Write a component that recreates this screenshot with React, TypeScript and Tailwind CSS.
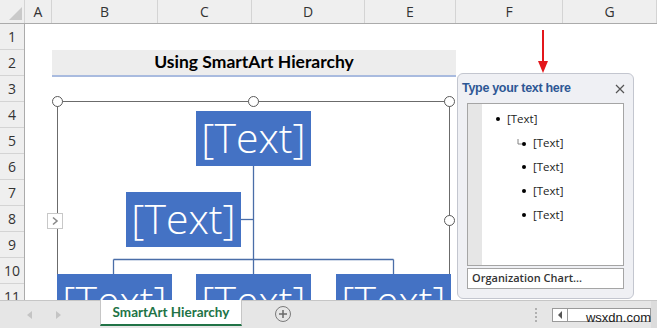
import React from "react";

const cols = [
  { l: "A", w: 27 },
  { l: "B", w: 106 },
  { l: "C", w: 94 },
  { l: "D", w: 113 },
  { l: "E", w: 91 },
  { l: "F", w: 107 },
  { l: "G", w: 94 },
];
const rows = [1, 2, 3, 4, 5, 6, 7, 8, 9, 10, 11];

function Box({ x, y }: { x: number; y: number }) {
  return (
    <div
      className="absolute w-[115px] h-[55px] bg-[#4472c4] flex items-center justify-center text-white text-[41px] font-light leading-none"
      style={{ left: x, top: y, fontFamily: '"Open Sans", sans-serif' }}
    >
      <span className="-mt-[2px]">[Text]</span>
    </div>
  );
}

function Handle({ x, y }: { x: number; y: number }) {
  return (
    <div
      className="absolute w-[11px] h-[11px] rounded-full border-[1.5px] border-[#5a5a5a] bg-white"
      style={{ left: x - 5.5, top: y - 5.5 }}
    />
  );
}

export default function App() {
  const hdrFont = { fontFamily: '"Open Sans", "Liberation Sans", sans-serif' };
  return (
    <div className="w-[657px] h-[328px] overflow-hidden bg-white flex flex-col relative" style={hdrFont}>
      {/* column header */}
      <div className="flex h-[24px] bg-[#efefef] border-b border-[#ababab] shrink-0">
        <div className="w-[25px] border-r border-[#d4d4d4] relative shrink-0">
          <svg className="absolute left-[7px] top-[7px]" width="16" height="14">
            <polygon points="15,0 15,13 2,13" fill="#c9c9c9" />
          </svg>
        </div>
        {cols.map((c) => (
          <div
            key={c.l}
            className="flex items-center justify-center text-[14px] text-[#333] border-r border-[#d4d4d4] shrink-0"
            style={{ width: c.w }}
          >
            {c.l}
          </div>
        ))}
      </div>
      {/* body */}
      <div className="flex flex-1 min-h-0">
        <div className="w-[25px] shrink-0 bg-[#efefef] border-r border-[#ababab] flex flex-col">
          {rows.map((r) => (
            <div
              key={r}
              className="h-[26px] shrink-0 flex items-center justify-center text-[14px] text-[#333] border-b border-[#d4d4d4]"
            >
              {r}
            </div>
          ))}
        </div>
        <div className="flex-1 relative overflow-hidden">
          {/* title band in row 2 */}
          <div className="absolute left-[27px] top-[26px] w-[404px] h-[27px] bg-[#ededed] border-b-[2px] border-[#a9bbdf] flex items-center justify-center">
            <span className="text-[17.5px] font-bold text-black" style={{ fontFamily: "Lato, sans-serif" }}>
              Using SmartArt Hierarchy
            </span>
          </div>

          {/* SmartArt frame */}
          <div className="absolute left-[32px] top-[77px] w-[393px] h-[240px] border-[1.5px] border-[#6b6b6b]" />
          <Handle x={32.5} y={77.5} />
          <Handle x={228.5} y={77.5} />
          <Handle x={424.5} y={77.5} />
          <Handle x={424.5} y={196} />
          <div className="absolute left-[22px] top-[189px] w-[16px] h-[16px] bg-white border border-[#c8c8c8] flex items-center justify-center">
            <svg width="8" height="10" viewBox="0 0 8 10">
              <path d="M2 1.5 L6 5 L2 8.5" stroke="#8a8a8a" strokeWidth="1.6" fill="none" />
            </svg>
          </div>

          {/* connectors */}
          <svg className="absolute left-0 top-0" width="632" height="276">
            <g stroke="#4a6ea8" strokeWidth="1.3" fill="none">
              <line x1="228.5" y1="142" x2="228.5" y2="250" />
              <line x1="216" y1="195.5" x2="228.5" y2="195.5" />
              <line x1="88.5" y1="235.5" x2="368.5" y2="235.5" />
              <line x1="88.5" y1="235.5" x2="88.5" y2="250" />
              <line x1="368.5" y1="235.5" x2="368.5" y2="250" />
            </g>
          </svg>
          <Box x={171} y={87} />
          <Box x={101} y={168} />
          <Box x={32} y={250} />
          <Box x={171} y={250} />
          <Box x={311} y={250} />

          {/* red arrow */}
          <svg className="absolute left-[510px] top-[5px]" width="16" height="45">
            <line x1="8" y1="1" x2="8" y2="34" stroke="#e3161b" strokeWidth="2" />
            <polygon points="3,32 13,32 8,44" fill="#e3161b" />
          </svg>

          {/* text pane */}
          <div className="absolute left-[432px] top-[49px] w-[177px] h-[226px] rounded-[6px] bg-[#eff0f4] border border-[#c3c6cf] flex flex-col px-[9px]">
            <div className="flex items-center justify-between h-[29px]">
              <span
                className="text-[12.5px] font-bold text-[#2d5794] -ml-[5px] tracking-[-0.3px]"
                style={{ fontFamily: '"Liberation Sans", Arial, sans-serif' }}
              >
                Type your text here
              </span>
              <svg width="10" height="10" viewBox="0 0 10 10" className="mr-[-1px]">
                <path d="M1 1 L9 9 M9 1 L1 9" stroke="#555" strokeWidth="1.2" />
              </svg>
            </div>
            <div className="h-[163px] bg-white border border-[#a5a5a5] flex">
              <div className="w-[14px] bg-[#e6e6e6] h-full" />
              <div
                className="flex flex-col pt-[3px] text-[11.5px] text-[#222]"
                style={{ fontFamily: '"Open Sans", sans-serif' }}
              >
                <div className="flex items-center h-[24px] pl-[14px]">
                  <span className="w-[4px] h-[4px] rounded-full bg-black mr-[7px]" />
                  [Text]
                </div>
                <div className="flex items-center h-[24px] pl-[32px]">
                  <svg width="14" height="8" viewBox="0 0 14 8" className="mr-[5px]">
                    <path d="M4 0 L4 5 L8 5" stroke="#777" strokeWidth="0.9" fill="none" />
                    <circle cx="10" cy="5" r="2" fill="#000" />
                  </svg>
                  [Text]
                </div>
                {[0, 1, 2].map((i) => (
                  <div key={i} className="flex items-center h-[24px] pl-[40px]">
                    <span className="w-[4px] h-[4px] rounded-full bg-black mr-[7px]" />
                    [Text]
                  </div>
                ))}
              </div>
            </div>
            <div
              className="mt-[2px] h-[21px] bg-white border border-[#a5a5a5] flex items-center pl-[4px] text-[11px] font-semibold text-[#333]"
              style={{ fontFamily: '"Open Sans", sans-serif' }}
            >
              Organization Chart...
            </div>
          </div>
        </div>
      </div>

      {/* tab bar */}
      <div className="h-[28px] shrink-0 bg-[#e6e6e6] border-t border-[#c6c6c6] flex items-start relative">
        <div className="w-[100px] h-full flex items-center">
          <svg width="8" height="10" className="ml-[26px]" viewBox="0 0 8 10">
            <polygon points="6,1 6,9 1,5" fill="#c4c4c4" />
          </svg>
          <svg width="8" height="10" className="ml-[20px]" viewBox="0 0 8 10">
            <polygon points="2,1 2,9 7,5" fill="#c4c4c4" />
          </svg>
        </div>
        <div className="w-[142px] h-[26px] -mt-[1px] bg-white border-x border-[#c6c6c6] border-b-[2px] border-b-[#217346] flex items-center justify-center">
          <span className="text-[13.5px] font-bold text-[#217346]" style={{ fontFamily: "Lato, sans-serif" }}>
            SmartArt Hierarchy
          </span>
        </div>
        <div className="ml-[33px] mt-[5px] w-[16px] h-[16px] rounded-full border-[1.5px] border-[#7a7a7a] flex items-center justify-center">
          <svg width="10" height="10" viewBox="0 0 10 10">
            <path d="M5 1 V9 M1 5 H9" stroke="#6a6a6a" strokeWidth="1.5" />
          </svg>
        </div>
        <div className="ml-[244px] mt-[7px] flex flex-col gap-[2px]">
          <span className="w-[2px] h-[2px] bg-[#b0b0b0]" />
          <span className="w-[2px] h-[2px] bg-[#b0b0b0]" />
          <span className="w-[2px] h-[2px] bg-[#b0b0b0]" />
          <span className="w-[2px] h-[2px] bg-[#b0b0b0]" />
        </div>
        <div className="ml-[15px] mt-[7px] w-[99px] h-[14px] bg-white border border-[#9a9a9a] flex">
          <div className="w-[15px] h-full border-r border-[#9a9a9a] flex items-center justify-center">
            <svg width="6" height="8" viewBox="0 0 6 8">
              <polygon points="5,0 5,8 1,4" fill="#555" />
            </svg>
          </div>
          <div className="flex-1 flex items-end justify-end">
            <span className="text-[13px] leading-none text-[#1a1a1a] -mb-[3px] -mr-[1px]" style={{ fontFamily: '"Liberation Sans", sans-serif' }}>
              wsxdn.com
            </span>
          </div>
        </div>
        <div className="flex-1 h-full bg-[#dcdcdc]" />
      </div>
    </div>
  );
}
